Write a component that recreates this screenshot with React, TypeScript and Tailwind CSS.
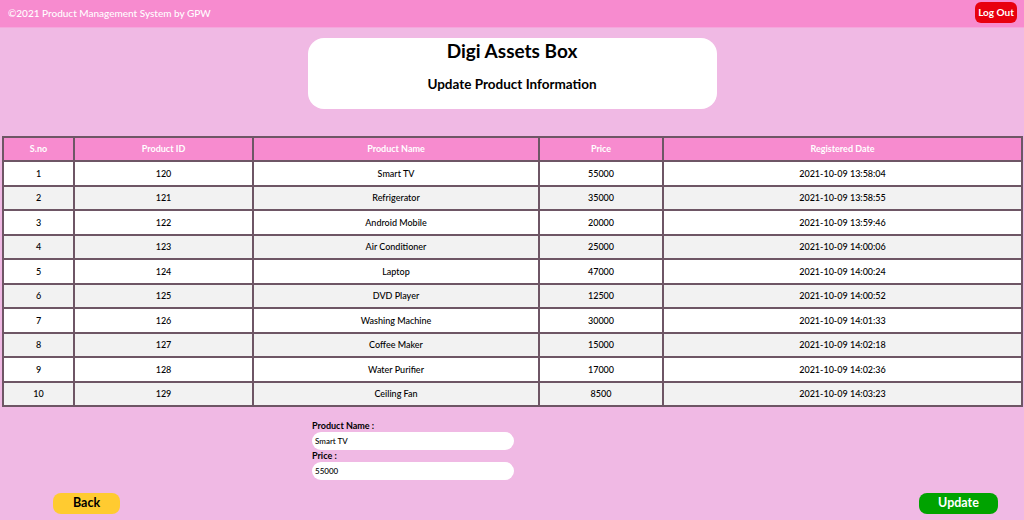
import React from "react";

const rows = [
  { sno: 1, id: 120, name: "Smart TV", price: 55000, date: "2021-10-09 13:58:04" },
  { sno: 2, id: 121, name: "Refrigerator", price: 35000, date: "2021-10-09 13:58:55" },
  { sno: 3, id: 122, name: "Android Mobile", price: 20000, date: "2021-10-09 13:59:46" },
  { sno: 4, id: 123, name: "Air Conditioner", price: 25000, date: "2021-10-09 14:00:06" },
  { sno: 5, id: 124, name: "Laptop", price: 47000, date: "2021-10-09 14:00:24" },
  { sno: 6, id: 125, name: "DVD Player", price: 12500, date: "2021-10-09 14:00:52" },
  { sno: 7, id: 126, name: "Washing Machine", price: 30000, date: "2021-10-09 14:01:33" },
  { sno: 8, id: 127, name: "Coffee Maker", price: 15000, date: "2021-10-09 14:02:18" },
  { sno: 9, id: 128, name: "Water Purifier", price: 17000, date: "2021-10-09 14:02:36" },
  { sno: 10, id: 129, name: "Ceiling Fan", price: 8500, date: "2021-10-09 14:03:23" },
];

const App = () => {
  return (
    <div className="w-[1024px] h-[520px] bg-[#f0b9e4] font-['Lato','Noto_Sans',sans-serif] text-black overflow-hidden flex flex-col">
      <div className="h-[28px] bg-[#f78bcf] flex items-center justify-between pl-2 pr-[7px] border-b border-[#f5a6dc]">
        <span className="text-[10px] font-medium text-white">©2021 Product Management System by GPW</span>
        <button className="bg-[#e8000e] text-white text-[10px] font-bold rounded-md px-0 h-[21px] w-[42px] mt-[-3px] whitespace-nowrap">
          Log Out
        </button>
      </div>

      <div className="flex justify-center mt-[10px]">
        <div className="w-[409px] h-[71px] bg-white rounded-2xl flex flex-col items-center">
          <h1 className="text-[19px] font-bold leading-[26px]">Digi Assets Box</h1>
          <h2 className="text-[13.5px] font-bold mt-[10px] leading-[20px]">Update Product Information</h2>
        </div>
      </div>

      <div className="mt-[27px] pl-[2px]">
        <table className="w-[1021px] border-collapse border-2 border-[#6e5665] text-[9px] text-center font-medium">
          <thead>
            <tr className="bg-[#f78bcf] text-white h-[24px]">
              <th className="w-[71px] border-2 border-[#6e5665] font-bold">S.no</th>
              <th className="w-[179px] border-2 border-[#6e5665] font-bold">Product ID</th>
              <th className="w-[286px] border-2 border-[#6e5665] font-bold">Product Name</th>
              <th className="w-[124px] border-2 border-[#6e5665] font-bold">Price</th>
              <th className="border-2 border-[#6e5665] font-bold">Registered Date</th>
            </tr>
          </thead>
          <tbody>
            {rows.map((r) => (
              <tr key={r.sno} className={`h-[24.5px] ${r.sno % 2 === 0 ? "bg-[#f2f2f2]" : "bg-white"}`}>
                <td className="border-2 border-[#6e5665]">{r.sno}</td>
                <td className="border-2 border-[#6e5665]">{r.id}</td>
                <td className="border-2 border-[#6e5665]">{r.name}</td>
                <td className="border-2 border-[#6e5665]">{r.price}</td>
                <td className="border-2 border-[#6e5665]">{r.date}</td>
              </tr>
            ))}
          </tbody>
        </table>
      </div>

      <div className="flex flex-col w-[202px] ml-[312px] mt-[13px] text-[9px]">
        <label className="font-bold leading-[12px]">Product Name :</label>
        <input
          readOnly
          value="Smart TV"
          className="h-[18px] w-[202px] rounded-full bg-white px-[3px] text-[8px] font-medium outline-none"
        />
        <label className="font-bold leading-[12px]">Price :</label>
        <input
          readOnly
          value="55000"
          className="h-[18px] w-[202px] rounded-full bg-white px-[3px] text-[8px] font-medium outline-none"
        />
      </div>

      <div className="flex justify-between pl-[53px] pr-[26px] mt-[13px]">
        <button className="w-[67px] h-[21px] bg-[#ffcb30] rounded-lg text-[12.5px] font-bold">Back</button>
        <button className="w-[79px] h-[21px] bg-[#00a300] text-white rounded-lg text-[12.5px] font-bold">Update</button>
      </div>
    </div>
  );
};

export default App;
